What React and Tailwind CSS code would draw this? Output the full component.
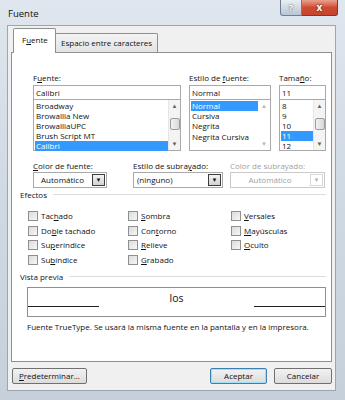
import React from "react";

const font = { fontFamily: "'Open Sans', 'Noto Sans', sans-serif" };

function U({ children }) {
  return <span className="underline underline-offset-1">{children}</span>;
}

function ScrollBar() {
  return (
    <div className="w-[12px] h-full bg-[#f4f4f4] border-l border-[#e6e6e6] flex flex-col items-center justify-between py-[3px]">
      <span className="text-[6px] leading-none text-[#606060]">▲</span>
      <div className="w-[10px] flex-1 flex flex-col py-[3px]">
        <div className="mt-[6px] h-[12px] w-[10px] rounded-[2px] border border-[#9b9b9b] bg-gradient-to-r from-[#f2f2f2] to-[#d8d8d8]" />
      </div>
      <span className="text-[6px] leading-none text-[#606060]">▼</span>
    </div>
  );
}

function ListBox({ items, selected, width, scroll }) {
  return (
    <div className={`${width} h-[51px] border border-[#a9a9a9] border-t-0 bg-white flex`}>
      <div className="flex-1 flex flex-col pl-[1px] pt-[1px]">
        {items.map((it) => (
          <div
            key={it}
            className={`h-[10.2px] leading-[10px] pl-[1px] whitespace-nowrap ${it === selected ? "bg-[#3399ff] text-white" : "text-[#111]"}`}
          >
            {it}
          </div>
        ))}
      </div>
      {scroll}
    </div>
  );
}

function Combo({ width, text, center, disabled }) {
  return (
    <div className={`${width} h-[16px] border ${disabled ? "border-[#c9c9c9] text-[#a0a0a0]" : "border-[#a9a9a9] text-[#111]"} bg-white flex items-stretch`}>
      <div className={`flex-1 leading-[14px] ${center ? "text-center" : "pl-[3px]"}`}>{text}</div>
      <div
        className={`w-[13px] m-[1px] flex items-center justify-center text-[6px] ${disabled ? "border border-[#d7d7d7] text-[#b0b0b0]" : "border border-[#3c3c3c] bg-gradient-to-b from-[#f4f4f4] to-[#d2d2d2] text-[#111]"}`}
      >
        ▼
      </div>
    </div>
  );
}

function Check({ children }) {
  return (
    <div className="flex items-center gap-[3px] h-[14.5px]">
      <div className="w-[10px] h-[10px] border border-[#8f8f8f] bg-gradient-to-br from-[#dcdcdc] to-[#f6f6f6]" />
      <span className="text-[#111] leading-none">{children}</span>
    </div>
  );
}

function Btn({ children, width, def }) {
  return (
    <div
      className={`${width} h-[16px] rounded-[2px] border ${def ? "border-[#3c7fb1] shadow-[inset_0_0_0_1px_#9ee0f7]" : "border-[#707070]"} bg-gradient-to-b from-[#f2f2f2] to-[#dcdcdc] flex items-center justify-center text-[#111]`}
    >
      {children}
    </div>
  );
}

export default function App() {
  return (
    <div
      className="w-[345px] h-[400px] bg-gradient-to-b from-[#dfe6ee] via-[#cfd9e3] to-[#c6d0da] relative overflow-hidden"
      style={font}
    >
      {/* Title bar */}
      <div className="h-[25px] flex items-start justify-between pr-[7px]">
        <div className="pl-[8px] pt-[7px] text-[9.5px] text-[#111]">Fuente</div>
        <div className="flex">
          <div className="w-[22px] h-[16px] border border-[#6f7f92] border-t-0 rounded-bl-[3px] bg-gradient-to-b from-[#e9eef3] to-[#b9c6d3] flex items-center justify-center text-[9px] font-bold text-white [text-shadow:0_0_2px_#333]">
            ?
          </div>
          <div className="w-[36px] h-[16px] border border-[#7a3a30] border-t-0 border-l-0 rounded-br-[3px] bg-gradient-to-b from-[#e8a08f] via-[#cf4a32] to-[#c7432b] flex items-center justify-center text-[10px] font-bold text-white [text-shadow:0_0_2px_#400]">
            x
          </div>
        </div>
      </div>

      {/* Client area */}
      <div className="ml-[7px] mr-[9px] h-[366px] bg-[#f0f0f0] border border-[#9aa6b2] pt-[1px] px-[3px] text-[8px] text-[#111] flex flex-col whitespace-nowrap">
        {/* Tabs */}
        <div className="flex items-end h-[25px] pl-[2px]">
          <div className="w-[43px] h-[25px] bg-white border border-[#8e8f8f] border-b-0 rounded-t-[2px] pl-[8px] pt-[5px] relative z-10 mb-[-1px]">
            F<U>u</U>ente
          </div>
          <div className="w-[102px] h-[19px] bg-gradient-to-b from-[#f3f3f3] to-[#e3e3e3] border border-[#8e8f8f] border-l-0 border-b-0 rounded-tr-[2px] pl-[5px] pt-[3px]">
            Espacio entre caracteres
          </div>
        </div>

        {/* Panel */}
        <div className="h-[310px] bg-white border border-[#8e8f8f] flex flex-col pt-[19px]">
          <div className="flex pl-[21px] gap-[8px]">
            <div className="flex flex-col">
              <div className="h-[13px]">F<U>u</U>ente:</div>
              <div className="w-[148px] h-[15px] border border-[#a9a9a9] pl-[2px] leading-[13px]">Calibri</div>
              <ListBox
                width="w-[148px]"
                items={["Broadway", "Browallia New", "BrowalliaUPC", "Brush Script MT", "Calibri"]}
                selected="Calibri"
                scroll={<ScrollBar />}
              />
            </div>
            <div className="flex flex-col">
              <div className="h-[13px]">Estilo de <U>f</U>uente:</div>
              <div className="w-[82px] h-[15px] border border-[#a9a9a9] pl-[2px] leading-[13px]">Normal</div>
              <ListBox
                width="w-[82px]"
                items={["Normal", "Cursiva", "Negrita", "Negrita Cursiva"]}
                selected="Normal"
                scroll={
                  <div className="w-[12px] h-full flex flex-col items-center justify-between py-[3px] text-[6px] text-[#b5b5b5]">
                    <span className="leading-none">▲</span>
                    <span className="leading-none">▼</span>
                  </div>
                }
              />
            </div>
            <div className="flex flex-col">
              <div className="h-[13px]">Tama<U>ñ</U>o:</div>
              <div className="w-[47px] h-[15px] border border-[#a9a9a9] pl-[2px] leading-[13px]">11</div>
              <ListBox
                width="w-[47px]"
                items={["8", "9", "10", "11", "12"]}
                selected="11"
                scroll={<ScrollBar />}
              />
            </div>
          </div>

          {/* Combos */}
          <div className="flex pl-[21px] mt-[9px]">
            <div className="flex flex-col w-[100px]">
              <div className="h-[12px]"><U>C</U>olor de fuente:</div>
              <Combo width="w-[74px]" text="Automático" center />
            </div>
            <div className="flex flex-col w-[97px]">
              <div className="h-[12px]">Estilo de subra<U>y</U>ado:</div>
              <Combo width="w-[90px]" text="(ninguno)" />
            </div>
            <div className="flex flex-col">
              <div className="h-[12px] text-[#a0a0a0]">Color de subrayado:</div>
              <Combo width="w-[95px]" text="Automático" center disabled />
            </div>
          </div>

          {/* Efectos */}
          <div className="flex items-center pl-[8px] pr-[5px] mt-0 h-[13px]">
            <span>Efectos</span>
            <div className="flex-1 ml-[6px] h-px bg-[#dcdcdc]" />
          </div>
          <div className="flex pl-[16px] mt-[8px]">
            <div className="flex flex-col w-[100px]">
              <Check>Tac<U>h</U>ado</Check>
              <Check>Do<U>b</U>le tachado</Check>
              <Check>Su<U>p</U>eríndice</Check>
              <Check>Su<U>b</U>índice</Check>
            </div>
            <div className="flex flex-col w-[103px]">
              <Check><U>S</U>ombra</Check>
              <Check>Con<U>t</U>orno</Check>
              <Check><U>R</U>elieve</Check>
              <Check><U>G</U>rabado</Check>
            </div>
            <div className="flex flex-col">
              <Check><U>V</U>ersales</Check>
              <Check><U>M</U>ayúsculas</Check>
              <Check><U>O</U>culto</Check>
            </div>
          </div>

          {/* Vista previa */}
          <div className="flex items-center pl-[8px] pr-[5px] mt-[3px] h-[13px]">
            <span>Vista previa</span>
            <div className="flex-1 ml-[6px] h-px bg-[#dcdcdc]" />
          </div>
          <div className="ml-[15px] mr-[5px] mt-[4px] h-[30px] border border-[#8e8f8f] flex flex-col">
            <div className="h-[19px] flex items-end">
              <div className="w-[71px] h-px bg-[#222]" />
              <div className="flex-1 text-center text-[10.5px] leading-[16px] mb-[1px]">los</div>
              <div className="w-[71px] h-px bg-[#222]" />
            </div>
          </div>
          <div className="pl-[15px] mt-[4px]">
            Fuente TrueType. Se usará la misma fuente en la pantalla y en la impresora.
          </div>
        </div>

        {/* Buttons */}
        <div className="flex items-center mt-[6px] pl-[1px]">
          <Btn width="w-[75px]"><U>P</U>redeterminar...</Btn>
          <div className="flex-1" />
          <Btn width="w-[57px]" def>Aceptar</Btn>
          <div className="w-[7px]" />
          <Btn width="w-[58px]">Cancelar</Btn>
        </div>
      </div>
    </div>
  );
}
